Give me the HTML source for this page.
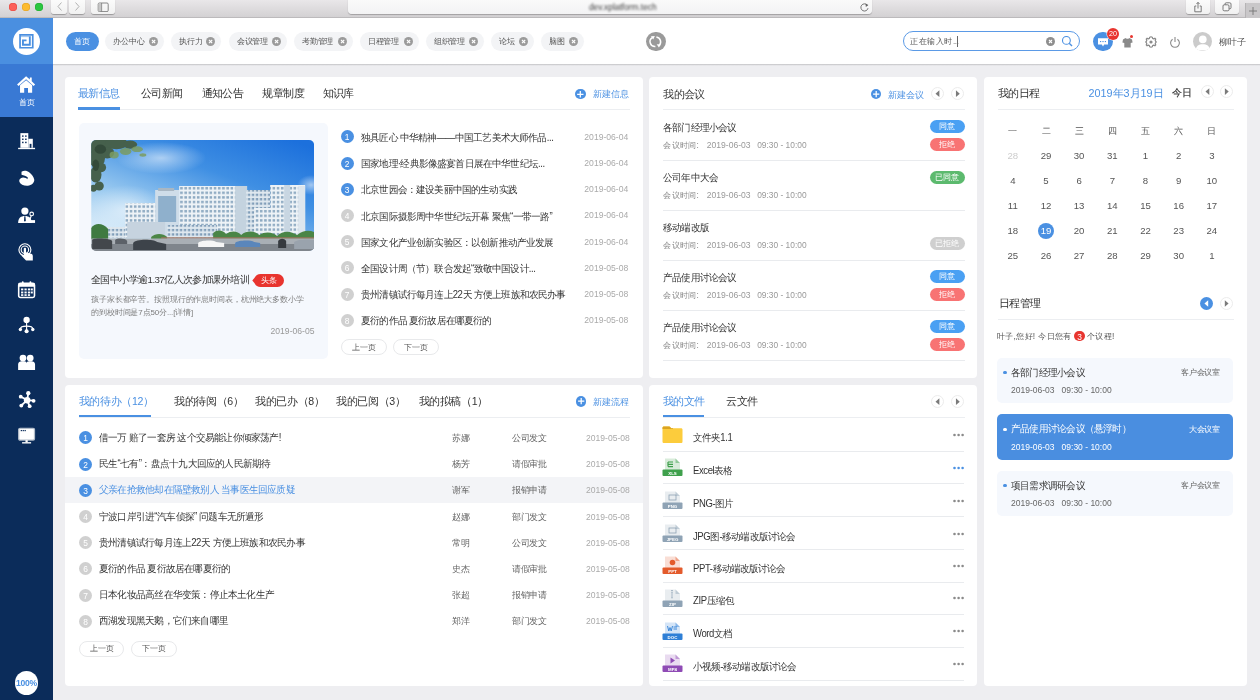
<!DOCTYPE html><html><head><meta charset="utf-8"><title>dashboard</title><style>
*{margin:0;padding:0;box-sizing:border-box}
html,body{width:1260px;height:700px;overflow:hidden;background:#eeeef1;font-family:"Liberation Sans",sans-serif}
#root{position:absolute;left:0;top:0;width:1260px;height:700px;overflow:hidden;background:#eeeef1;will-change:transform}
.a{position:absolute}
.t{position:absolute;white-space:nowrap;line-height:0;height:0}
.r{text-align:right}
.c{text-align:center}
</style></head><body><div id="root">
<div class="a " style="left:0.0px;top:0.0px;width:1260.0px;height:18.0px;background:linear-gradient(#e9e7e9,#d3d1d3);border-bottom:1px solid #bcbabc"></div>
<div class="a" style="left:8.5px;top:2.5px;width:8.4px;height:8.4px;border-radius:50%;background:#fc5f58;box-shadow:inset 0 0 0 0.5px #e3463f"></div>
<div class="a" style="left:21.5px;top:2.5px;width:8.4px;height:8.4px;border-radius:50%;background:#fdbb2f;box-shadow:inset 0 0 0 0.5px #dfa023"></div>
<div class="a" style="left:34.7px;top:2.5px;width:8.4px;height:8.4px;border-radius:50%;background:#2bc640;box-shadow:inset 0 0 0 0.5px #1fa82f"></div>
<div class="a " style="left:51.4px;top:-3.0px;width:15.7px;height:16.8px;background:linear-gradient(#fdfdfd,#f1f1f1);border-radius:3px;box-shadow:0 0.6px 0.8px rgba(0,0,0,.28)"></div>
<div class="a " style="left:68.8px;top:-3.0px;width:16.0px;height:16.8px;background:linear-gradient(#fdfdfd,#f1f1f1);border-radius:3px;box-shadow:0 0.6px 0.8px rgba(0,0,0,.28)"></div>
<div class="a " style="left:91.2px;top:-3.0px;width:24.0px;height:16.8px;background:linear-gradient(#fdfdfd,#f1f1f1);border-radius:3px;box-shadow:0 0.6px 0.8px rgba(0,0,0,.28)"></div>
<svg class="a" style="left:55.0px;top:1.0px;" width="10" height="11" viewBox="0 0 10 11"><path d="M6.5 1.5 L3 5.5 L6.5 9.5" fill="none" stroke="#a9a9a9" stroke-width="0.9"/></svg>
<svg class="a" style="left:72.0px;top:1.0px;" width="10" height="11" viewBox="0 0 10 11"><path d="M3.5 1.5 L7 5.5 L3.5 9.5" fill="none" stroke="#a9a9a9" stroke-width="0.9"/></svg>
<svg class="a" style="left:97.0px;top:1.5px;" width="12" height="10" viewBox="0 0 12 10"><rect x="1.2" y="1" width="10" height="8.6" rx="1.2" fill="none" stroke="#7a7a7a" stroke-width="0.9"/><line x1="4.6" y1="1" x2="4.6" y2="9.6" stroke="#7a7a7a" stroke-width="0.9"/><rect x="1.6" y="1.5" width="2.6" height="7.6" fill="#c6c6c6"/></svg>
<div class="a " style="left:348.0px;top:-3.0px;width:524.0px;height:17.3px;background:linear-gradient(#fbfbfb,#f3f3f4);border-radius:4px;box-shadow:0 0.7px 1px rgba(0,0,0,.25)"></div>
<div class="a" style="left:562.8px;top:0px;width:120px;height:15px;line-height:15px;text-align:center;font-size:8.4px;color:#404040;filter:blur(0.9px);white-space:nowrap">dev.xplatform.tech</div>
<svg class="a" style="left:859.0px;top:1.5px;" width="11" height="11" viewBox="0 0 11 11"><path d="M8.3 3.2 A3.6 3.6 0 1 0 9 6.2" fill="none" stroke="#666" stroke-width="0.9"/><path d="M6.6 1.4 L9.4 3.1 L6.8 4.9 Z" fill="#666"/></svg>
<div class="a " style="left:1186.0px;top:-3.0px;width:23.6px;height:16.9px;background:linear-gradient(#fdfdfd,#f1f1f1);border-radius:3px;box-shadow:0 0.6px 0.8px rgba(0,0,0,.28)"></div>
<div class="a " style="left:1215.0px;top:-3.0px;width:23.9px;height:16.9px;background:linear-gradient(#fdfdfd,#f1f1f1);border-radius:3px;box-shadow:0 0.6px 0.8px rgba(0,0,0,.28)"></div>
<svg class="a" style="left:1192.0px;top:0.5px;" width="12" height="12" viewBox="0 0 12 12"><path d="M4.3 5 H2.8 V10.8 H9.2 V5 H7.7" fill="none" stroke="#6d6d6d" stroke-width="0.9"/><line x1="6" y1="1.5" x2="6" y2="7.5" stroke="#6d6d6d" stroke-width="0.9"/><path d="M4.5 3 L6 1.3 L7.5 3" fill="none" stroke="#6d6d6d" stroke-width="0.9"/></svg>
<svg class="a" style="left:1221.0px;top:1.0px;" width="12" height="12" viewBox="0 0 12 12"><rect x="4" y="1.8" width="6" height="6" rx="1.2" fill="none" stroke="#6d6d6d" stroke-width="0.9"/><rect x="2" y="3.8" width="6" height="6" rx="1.2" fill="#f6f6f6" stroke="#6d6d6d" stroke-width="0.9"/></svg>
<div class="a " style="left:1245.0px;top:3.0px;width:15.0px;height:14.5px;background:#c9c7c9;border-left:0.5px solid #b5b3b5"></div>
<svg class="a" style="left:1247.0px;top:5.0px;" width="12" height="12" viewBox="0 0 12 12"><line x1="6" y1="2" x2="6" y2="10" stroke="#777" stroke-width="0.9"/><line x1="2" y1="6" x2="10" y2="6" stroke="#777" stroke-width="0.9"/></svg>
<div class="a " style="left:0.0px;top:18.0px;width:52.7px;height:682.0px;background:#0b2c5a"></div>
<div class="a " style="left:0.0px;top:18.0px;width:52.7px;height:46.0px;background:#4a8fe0"></div>
<div class="a " style="left:0.0px;top:64.0px;width:52.7px;height:53.0px;background:#3979d4"></div>
<div class="a" style="left:13.1px;top:27.5px;width:27.0px;height:27.0px;border-radius:50%;background:#fff"></div>
<svg class="a" style="left:17.0px;top:32.0px;" width="19" height="19" viewBox="0 0 19 19"><path d="M2.2 2 H16.6 V16.6 H2.2 Z M3.9 3.7 H14.9 V14.9 H3.9 Z" fill="#4a8fe0" fill-rule="evenodd"/><rect x="3.9" y="4.2" width="10" height="0.9" fill="#4a8fe0" opacity="0.6"/><path d="M11.9 4.6 H13.75 V13.7 H5 V7.6 H9.5 V9.3 H6.9 V11.7 H11.9 Z" fill="#4a8fe0"/></svg>
<svg class="a" style="left:16.4px;top:74.8px;" width="20.2" height="18.6" viewBox="0 0 19 17"><path d="M9.5 1 L1 8.6 L2.4 10 L9.5 3.7 L16.6 10 L18 8.6 L14.8 5.7 V2 H13 V4.1 Z" fill="#fff"/><path d="M3.8 9.4 L9.5 4.6 L15.2 9.4 V16.5 H11.3 V12 H7.7 V16.5 H3.8 Z" fill="#fff"/></svg>
<div class="t c" style="left:1.5px;width:50px;top:103.3px;font-size:8.20px;color:#fff;">首页</div>
<svg class="a" style="left:17.3px;top:131.6px;" width="19.2" height="19.2" viewBox="0 0 17 17"><path d="M3 1 H10 V14 H3 Z" fill="#fff"/><path d="M10 6 H14 V14 H10 Z" fill="#fff"/><rect x="1" y="14" width="15" height="1.2" fill="#fff"/><g fill="#0b2c5a"><rect x="4.5" y="3" width="1.3" height="1.3"/><rect x="7.2" y="3" width="1.3" height="1.3"/><rect x="4.5" y="5.8" width="1.3" height="1.3"/><rect x="7.2" y="5.8" width="1.3" height="1.3"/><rect x="4.5" y="8.6" width="1.3" height="1.3"/><rect x="7.2" y="8.6" width="1.3" height="1.3"/><rect x="11.2" y="10.5" width="1.6" height="3.5"/></g></svg>
<svg class="a" style="left:17.3px;top:168.6px;" width="19.2" height="19.2" viewBox="0 0 17 17"><path d="M4 2.5 C6 1 9 1.5 11 3 C13 4.5 15 7 15.3 9.5 C15.5 12 13 14.5 9.5 14.8 C6 15 3 13.5 2.2 11.5 C1.6 9.5 3 7.8 5.3 7.6 C7 7.5 8.5 8.3 9.2 9 L9.6 7.5 C8.2 6.2 6 5.3 4 5 Z" fill="#fff"/></svg>
<svg class="a" style="left:17.3px;top:205.6px;" width="19.2" height="19.2" viewBox="0 0 17 17"><circle cx="7" cy="4.5" r="3.2" fill="#fff"/><path d="M1 15 C1 10.5 3.5 8.8 7 8.8 C10.5 8.8 13 10.5 13 15 Z" fill="#fff"/><path d="M6.5 9 L7.5 9 L7.8 13 L7 14 L6.2 13 Z" fill="#0b2c5a"/><circle cx="13" cy="7" r="1.6" fill="none" stroke="#fff" stroke-width="1"/><line x1="12.6" y1="8.5" x2="11.5" y2="12" stroke="#fff" stroke-width="1"/><rect x="9" y="12.5" width="7" height="2.5" fill="#fff"/></svg>
<svg class="a" style="left:17.3px;top:242.6px;" width="19.2" height="19.2" viewBox="0 0 17 17"><circle cx="7" cy="6" r="5.3" fill="none" stroke="#fff" stroke-width="1"/><circle cx="7" cy="6" r="3.3" fill="none" stroke="#fff" stroke-width="1"/><path d="M6 5 C6 4 8 4 8 5 V8.5 L12.5 9.5 C13.5 9.8 14 10.5 14 11.5 V15.5 H8 L4.2 11.5 C3.8 11 4.5 10.2 5.2 10.5 L6 11 Z" fill="#fff"/></svg>
<svg class="a" style="left:17.3px;top:279.6px;" width="19.2" height="19.2" viewBox="0 0 17 17"><rect x="1.5" y="3" width="14" height="12.5" rx="1.5" fill="none" stroke="#fff" stroke-width="1.4"/><rect x="1.5" y="3" width="14" height="3" fill="#fff"/><rect x="4.3" y="1" width="1.6" height="3.5" rx="0.8" fill="#fff"/><rect x="11.1" y="1" width="1.6" height="3.5" rx="0.8" fill="#fff"/><g fill="#fff"><rect x="3.6" y="7.5" width="2" height="1.7"/><rect x="6.6" y="7.5" width="2" height="1.7"/><rect x="9.6" y="7.5" width="2" height="1.7"/><rect x="12.2" y="7.5" width="1.8" height="1.7"/><rect x="3.6" y="10.2" width="2" height="1.7"/><rect x="6.6" y="10.2" width="2" height="1.7"/><rect x="9.6" y="10.2" width="2" height="1.7"/><rect x="12.2" y="10.2" width="1.8" height="1.7"/><rect x="3.6" y="12.6" width="2" height="1.5"/><rect x="6.6" y="12.6" width="2" height="1.5"/><rect x="9.6" y="12.6" width="2" height="1.5"/></g></svg>
<svg class="a" style="left:17.3px;top:315.6px;" width="19.2" height="19.2" viewBox="0 0 17 17"><circle cx="8.5" cy="3.5" r="2.8" fill="#fff"/><line x1="8.5" y1="6" x2="8.5" y2="13" stroke="#fff" stroke-width="1"/><path d="M3 11.5 Q3 9 8.5 9 Q14 9 14 11.5" fill="none" stroke="#fff" stroke-width="1"/><circle cx="3" cy="12" r="1.5" fill="#fff"/><circle cx="14" cy="12" r="1.5" fill="#fff"/><circle cx="8.5" cy="13.5" r="1.8" fill="#fff"/></svg>
<svg class="a" style="left:17.3px;top:352.6px;" width="19.2" height="19.2" viewBox="0 0 17 17"><circle cx="5.3" cy="4.5" r="3" fill="#fff"/><circle cx="11.7" cy="4.5" r="3" fill="#fff"/><path d="M1 15 V10 C1 8.2 2.5 7.3 4.3 7.3 H6.3 C8 7.3 8.5 8 8.5 9 C8.5 8 9.2 7.3 10.8 7.3 H12.7 C14.5 7.3 16 8.2 16 10 V15 Z" fill="#fff"/></svg>
<svg class="a" style="left:17.3px;top:389.6px;" width="19.2" height="19.2" viewBox="0 0 17 17"><g stroke="#fff" stroke-width="1.6"><line x1="9" y1="9" x2="10" y2="3"/><line x1="9" y1="9" x2="3.5" y2="6"/><line x1="9" y1="9" x2="14.5" y2="9.5"/><line x1="9" y1="9" x2="4" y2="13.5"/><line x1="9" y1="9" x2="11" y2="14"/></g><circle cx="9" cy="9" r="2.9" fill="#fff"/><g fill="#fff"><circle cx="10" cy="2.8" r="1.9"/><circle cx="3.3" cy="5.9" r="1.7"/><circle cx="14.7" cy="9.6" r="1.7"/><circle cx="3.8" cy="13.8" r="1.7"/><circle cx="11.2" cy="14.3" r="1.7"/></g></svg>
<svg class="a" style="left:17.3px;top:425.6px;" width="19.2" height="19.2" viewBox="0 0 17 17"><rect x="1.5" y="2" width="14" height="10.5" rx="1.2" fill="#fff" stroke="#b3bdca" stroke-width="1.1"/><rect x="7.5" y="12.5" width="2" height="2" fill="#fff"/><rect x="4.5" y="14.3" width="8" height="1.2" fill="#fff"/><g fill="#0b2c5a"><rect x="3.3" y="3.5" width="1.1" height="1.1"/><rect x="5" y="3.5" width="1.1" height="1.1"/><rect x="6.7" y="3.5" width="1.1" height="1.1"/></g></svg>
<div class="a" style="left:14.7px;top:671.2px;width:23.6px;height:23.6px;border-radius:50%;background:#fff"></div>
<div class="t c" style="left:11.5px;width:30px;top:682.7px;font-size:8.60px;color:#4a90e2;font-weight:bold;letter-spacing:-0.3px">100%</div>
<div class="a " style="left:52.7px;top:18.0px;width:1207.3px;height:46.0px;background:#fff"></div>
<div class="a " style="left:52.7px;top:63.6px;width:1207.3px;height:2.8px;background:linear-gradient(rgba(0,0,0,.2),rgba(0,0,0,.05) 60%,rgba(0,0,0,0))"></div>
<div class="a " style="left:66.0px;top:32.2px;width:32.6px;height:18.4px;background:#4a90e2;border-radius:10px"></div>
<div class="t c" style="left:62.3px;width:40px;top:42.0px;font-size:8.20px;color:#fff;">首页</div>
<div class="a " style="left:105.4px;top:32.2px;width:58.4px;height:18.4px;background:#f3f4f6;border-radius:10px"></div>
<div class="t" style="left:113.4px;top:42.0px;font-size:8.00px;color:#555;;letter-spacing:-0.20px">办公中心</div>
<div class="a" style="left:148.7px;top:36.8px;width:9.2px;height:9.2px;border-radius:50%;background:#9b9b9b"></div>
<svg class="a" style="left:148.7px;top:36.8px;" width="9.2" height="9.2" viewBox="0 0 9.2 9.2"><path d="M3 3 L6.2 6.2 M6.2 3 L3 6.2" stroke="#fff" stroke-width="1.1"/></svg>
<div class="a " style="left:171.0px;top:32.2px;width:50.4px;height:18.4px;background:#f3f4f6;border-radius:10px"></div>
<div class="t" style="left:179.0px;top:42.0px;font-size:8.00px;color:#555;;letter-spacing:-0.20px">执行力</div>
<div class="a" style="left:206.3px;top:36.8px;width:9.2px;height:9.2px;border-radius:50%;background:#9b9b9b"></div>
<svg class="a" style="left:206.3px;top:36.8px;" width="9.2" height="9.2" viewBox="0 0 9.2 9.2"><path d="M3 3 L6.2 6.2 M6.2 3 L3 6.2" stroke="#fff" stroke-width="1.1"/></svg>
<div class="a " style="left:228.8px;top:32.2px;width:58.2px;height:18.4px;background:#f3f4f6;border-radius:10px"></div>
<div class="t" style="left:236.8px;top:42.0px;font-size:8.00px;color:#555;;letter-spacing:-0.20px">会议管理</div>
<div class="a" style="left:271.9px;top:36.8px;width:9.2px;height:9.2px;border-radius:50%;background:#9b9b9b"></div>
<svg class="a" style="left:271.9px;top:36.8px;" width="9.2" height="9.2" viewBox="0 0 9.2 9.2"><path d="M3 3 L6.2 6.2 M6.2 3 L3 6.2" stroke="#fff" stroke-width="1.1"/></svg>
<div class="a " style="left:294.0px;top:32.2px;width:58.9px;height:18.4px;background:#f3f4f6;border-radius:10px"></div>
<div class="t" style="left:302.0px;top:42.0px;font-size:8.00px;color:#555;;letter-spacing:-0.20px">考勤管理</div>
<div class="a" style="left:337.8px;top:36.8px;width:9.2px;height:9.2px;border-radius:50%;background:#9b9b9b"></div>
<svg class="a" style="left:337.8px;top:36.8px;" width="9.2" height="9.2" viewBox="0 0 9.2 9.2"><path d="M3 3 L6.2 6.2 M6.2 3 L3 6.2" stroke="#fff" stroke-width="1.1"/></svg>
<div class="a " style="left:359.8px;top:32.2px;width:58.8px;height:18.4px;background:#f3f4f6;border-radius:10px"></div>
<div class="t" style="left:367.8px;top:42.0px;font-size:8.00px;color:#555;;letter-spacing:-0.20px">日程管理</div>
<div class="a" style="left:403.5px;top:36.8px;width:9.2px;height:9.2px;border-radius:50%;background:#9b9b9b"></div>
<svg class="a" style="left:403.5px;top:36.8px;" width="9.2" height="9.2" viewBox="0 0 9.2 9.2"><path d="M3 3 L6.2 6.2 M6.2 3 L3 6.2" stroke="#fff" stroke-width="1.1"/></svg>
<div class="a " style="left:425.9px;top:32.2px;width:57.8px;height:18.4px;background:#f3f4f6;border-radius:10px"></div>
<div class="t" style="left:433.9px;top:42.0px;font-size:8.00px;color:#555;;letter-spacing:-0.20px">组织管理</div>
<div class="a" style="left:468.6px;top:36.8px;width:9.2px;height:9.2px;border-radius:50%;background:#9b9b9b"></div>
<svg class="a" style="left:468.6px;top:36.8px;" width="9.2" height="9.2" viewBox="0 0 9.2 9.2"><path d="M3 3 L6.2 6.2 M6.2 3 L3 6.2" stroke="#fff" stroke-width="1.1"/></svg>
<div class="a " style="left:491.0px;top:32.2px;width:42.8px;height:18.4px;background:#f3f4f6;border-radius:10px"></div>
<div class="t" style="left:499.0px;top:42.0px;font-size:8.00px;color:#555;;letter-spacing:-0.20px">论坛</div>
<div class="a" style="left:518.7px;top:36.8px;width:9.2px;height:9.2px;border-radius:50%;background:#9b9b9b"></div>
<svg class="a" style="left:518.7px;top:36.8px;" width="9.2" height="9.2" viewBox="0 0 9.2 9.2"><path d="M3 3 L6.2 6.2 M6.2 3 L3 6.2" stroke="#fff" stroke-width="1.1"/></svg>
<div class="a " style="left:540.8px;top:32.2px;width:42.9px;height:18.4px;background:#f3f4f6;border-radius:10px"></div>
<div class="t" style="left:548.8px;top:42.0px;font-size:8.00px;color:#555;;letter-spacing:-0.20px">脑图</div>
<div class="a" style="left:568.6px;top:36.8px;width:9.2px;height:9.2px;border-radius:50%;background:#9b9b9b"></div>
<svg class="a" style="left:568.6px;top:36.8px;" width="9.2" height="9.2" viewBox="0 0 9.2 9.2"><path d="M3 3 L6.2 6.2 M6.2 3 L3 6.2" stroke="#fff" stroke-width="1.1"/></svg>
<div class="a" style="left:646.3px;top:31.6px;width:19.4px;height:19.4px;border-radius:50%;background:#9a9a9a"></div>
<svg class="a" style="left:646.1px;top:31.6px;" width="19.7" height="19.7" viewBox="0 0 19.7 19.7"><path d="M6.3 5.6 A4.9 4.9 0 0 0 9.4 14.6" fill="none" stroke="#fff" stroke-width="1.5"/><path d="M8.9 4.0 L4.9 4.3 L7.2 7.6 Z" fill="#fff"/><path d="M10.4 5.0 A4.9 4.9 0 0 1 12.9 13.6" fill="none" stroke="#fff" stroke-width="1.5"/><path d="M12.9 15.6 L10.7 12.2 L14.9 12.6 Z" fill="#fff"/></svg>
<div class="a " style="left:903.0px;top:31.0px;width:177.2px;height:20.4px;border:1px solid #5b9ae6;border-radius:10.2px;background:#fff"></div>
<div class="t" style="left:910.0px;top:41.7px;font-size:8.00px;color:#555;letter-spacing:0.6px">正在输入时<span style="letter-spacing:-0.4px">...</span></div>
<div class="a " style="left:956.5px;top:35.5px;width:0.8px;height:11.5px;background:#666"></div>
<div class="a" style="left:1045.8px;top:36.8px;width:9.0px;height:9.0px;border-radius:50%;background:#8e8e8e"></div>
<svg class="a" style="left:1045.8px;top:36.8px;" width="9" height="9" viewBox="0 0 9 9"><path d="M3 3 L6 6 M6 3 L3 6" stroke="#fff" stroke-width="1.1"/></svg>
<svg class="a" style="left:1061.0px;top:35.0px;" width="13" height="13" viewBox="0 0 13 13"><circle cx="5.4" cy="5.4" r="3.9" fill="none" stroke="#4a90e2" stroke-width="1.1"/><line x1="8.2" y1="8.2" x2="11" y2="11" stroke="#4a90e2" stroke-width="1.4"/></svg>
<div class="a" style="left:1093.2px;top:31.5px;width:19.6px;height:19.6px;border-radius:50%;background:#4a90e2"></div>
<svg class="a" style="left:1097.0px;top:36.5px;" width="12" height="11" viewBox="0 0 12 11"><path d="M1 1.2 H11 V7.6 H7.2 L6 9.4 L4.8 7.6 H1 Z" fill="#fff"/><g fill="#4a90e2"><rect x="3" y="4" width="1.2" height="1.1"/><rect x="5.4" y="4" width="1.2" height="1.1"/><rect x="7.8" y="4" width="1.2" height="1.1"/></g></svg>
<div class="a" style="left:1106.9px;top:28.4px;width:12.0px;height:12.0px;border-radius:50%;background:#e8352f;box-shadow:0 0 0 0.5px #fff"></div>
<div class="t c" style="left:1102.9px;width:20px;top:34.1px;font-size:7.20px;color:#fff;">20</div>
<svg class="a" style="left:1121.5px;top:37.0px;" width="11" height="11" viewBox="0 0 11 11"><path d="M3.5 1 L1 2.5 L0.4 5.5 L2.3 6 V10.5 H8.7 V6 L10.6 5.5 L10 2.5 L7.5 1 C7 2 4 2 3.5 1 Z" fill="#8a8a8a"/></svg>
<div class="a" style="left:1130.1px;top:34.6px;width:3.4px;height:3.4px;border-radius:50%;background:#e8352f"></div>
<svg class="a" style="left:1144.7px;top:36.0px;" width="12" height="12" viewBox="0 0 12 12"><path d="M6 0.8 L7.3 1.2 L7.6 2.4 L8.8 2.9 L9.9 2.2 L10.8 3.1 L10.2 4.3 L10.7 5.4 L11.2 6 L10.7 6.6 L10.2 7.7 L10.8 8.9 L9.9 9.8 L8.8 9.1 L7.6 9.6 L7.3 10.8 L6 11.2 L4.7 10.8 L4.4 9.6 L3.2 9.1 L2.1 9.8 L1.2 8.9 L1.8 7.7 L1.3 6.6 L0.8 6 L1.3 5.4 L1.8 4.3 L1.2 3.1 L2.1 2.2 L3.2 2.9 L4.4 2.4 L4.7 1.2 Z" fill="none" stroke="#8a8a8a" stroke-width="1.2" stroke-linejoin="round"/><circle cx="6" cy="6" r="1.6" fill="#8a8a8a"/></svg>
<svg class="a" style="left:1168.7px;top:36.0px;" width="12" height="12" viewBox="0 0 12 12"><path d="M3.6 3.2 A4.4 4.4 0 1 0 8.4 3.2" fill="none" stroke="#8a8a8a" stroke-width="1.1"/><line x1="6" y1="1" x2="6" y2="6" stroke="#8a8a8a" stroke-width="1.1"/></svg>
<div class="a" style="left:1192.6px;top:31.5px;width:19.6px;height:19.6px;border-radius:50%;background:#cbcbcb;overflow:hidden"><svg width="19.6" height="19.6" viewBox="0 0 20 20"><circle cx="10" cy="7.6" r="3.9" fill="#fff"/><path d="M2.6 19 C3 14 6 12.6 10 12.6 C14 12.6 17 14 17.4 19 Z" fill="#fff"/></svg></div>
<div class="t" style="left:1219.0px;top:41.5px;font-size:9.20px;color:#555;;letter-spacing:0.20px">柳叶子</div>
<div class="a " style="left:65.0px;top:77.0px;width:577.5px;height:301.0px;background:#fff;border-radius:4px"></div>
<div class="a " style="left:649.0px;top:77.0px;width:328.0px;height:301.0px;background:#fff;border-radius:4px"></div>
<div class="a " style="left:984.0px;top:77.0px;width:263.0px;height:609.0px;background:#fff;border-radius:4px"></div>
<div class="a " style="left:65.0px;top:385.0px;width:577.5px;height:301.0px;background:#fff;border-radius:4px"></div>
<div class="a " style="left:649.0px;top:385.0px;width:328.0px;height:301.0px;background:#fff;border-radius:4px"></div>
<div class="t" style="left:77.8px;top:92.8px;font-size:10.60px;color:#4a90e2;;letter-spacing:-0.60px">最新信息</div>
<div class="t" style="left:140.8px;top:92.8px;font-size:10.60px;color:#333;;letter-spacing:-0.60px">公司新闻</div>
<div class="t" style="left:201.7px;top:92.8px;font-size:10.60px;color:#333;;letter-spacing:-0.60px">通知公告</div>
<div class="t" style="left:262.4px;top:92.8px;font-size:10.60px;color:#333;;letter-spacing:-0.60px">规章制度</div>
<div class="t" style="left:322.7px;top:92.8px;font-size:10.60px;color:#333;;letter-spacing:-0.60px">知识库</div>
<div class="a " style="left:78.0px;top:109.0px;width:552.0px;height:1.0px;background:#eceef1"></div>
<div class="a " style="left:78.0px;top:107.2px;width:42.0px;height:2.4px;background:#4a90e2"></div>
<div class="a" style="left:575.3px;top:88.5px;width:10.6px;height:10.6px;border-radius:50%;background:#4a90e2"></div>
<svg class="a" style="left:575.3px;top:88.5px;" width="10.6" height="10.6" viewBox="0 0 10.6 10.6"><path d="M2.12 5.3 H8.48 M5.3 2.12 V8.48" stroke="#fff" stroke-width="1.25"/></svg>
<div class="t" style="left:592.7px;top:94.1px;font-size:9.30px;color:#4a90e2;">新建信息</div>
<div class="a " style="left:79.0px;top:123.0px;width:248.5px;height:236.0px;background:#f5f8fd;border-radius:5px"></div>
<svg class="a" style="left:91.2px;top:139.5px;" width="223.3" height="111" viewBox="0 0 223 111">
<defs>
<linearGradient id="sky" x1="0.9" y1="0" x2="0.15" y2="1">
<stop offset="0" stop-color="#1c70dc"/><stop offset="0.35" stop-color="#3f8fe3"/><stop offset="0.7" stop-color="#9ccbf0"/><stop offset="1" stop-color="#e8f4fb"/>
</linearGradient>
<radialGradient id="cl" cx="0.5" cy="0.5" r="0.5"><stop offset="0" stop-color="#fff" stop-opacity="0.55"/><stop offset="1" stop-color="#fff" stop-opacity="0"/></radialGradient>
<pattern id="win" width="4.2" height="4.6" patternUnits="userSpaceOnUse"><rect width="4.2" height="4.6" fill="#eef3f7"/><rect x="0.8" y="1" width="2.6" height="2.4" fill="#8eaac2"/></pattern>
<pattern id="win2" width="4" height="4.4" patternUnits="userSpaceOnUse"><rect width="4" height="4.4" fill="#dfe8ef"/><rect x="0.7" y="0.9" width="2.4" height="2.3" fill="#7f9db8"/></pattern>
<clipPath id="pc"><rect x="0" y="0" width="223" height="111" rx="5"/></clipPath>
</defs>
<g clip-path="url(#pc)">
<rect width="223" height="111" fill="url(#sky)"/>
<ellipse cx="70" cy="18" rx="45" ry="16" fill="url(#cl)"/>
<ellipse cx="35" cy="70" rx="40" ry="25" fill="url(#cl)"/>
<ellipse cx="220" cy="45" rx="14" ry="10" fill="url(#cl)"/>
<!-- buildings -->
<rect x="14" y="87" width="22" height="11" fill="url(#win2)"/>
<rect x="34" y="63" width="33" height="35" fill="url(#win)"/>
<rect x="64" y="50" width="24" height="48" fill="#cfdde9"/>
<rect x="67" y="56" width="18" height="26" fill="#8fb0cc"/>
<rect x="88" y="46" width="67" height="52" fill="url(#win)"/>
<rect x="144" y="46" width="12" height="52" fill="#c4d3df"/>
<rect x="155" y="50" width="24" height="48" fill="url(#win2)"/>
<rect x="163" y="68" width="20" height="30" fill="url(#win)"/>
<rect x="179" y="45" width="35" height="52" fill="url(#win)"/>
<rect x="193" y="45" width="6" height="52" fill="#c8d6e2"/>
<rect x="207" y="46" width="7" height="51" fill="#dde6ee"/>
<rect x="36" y="82" width="38" height="16" fill="#c6d3df"/>
<rect x="76" y="85" width="50" height="13" fill="url(#win2)"/>
<rect x="67" y="48" width="16" height="3" fill="#a9b7c3"/>
<!-- trees -->
<g transform="scale(1.15)"><g fill="#46604c">
<ellipse cx="6" cy="4" rx="12" ry="8"/><ellipse cx="22" cy="3" rx="10" ry="5"/><ellipse cx="34" cy="4" rx="6" ry="3.5"/>
<ellipse cx="5" cy="16" rx="7" ry="8"/><ellipse cx="14" cy="11" rx="6" ry="5"/><ellipse cx="4" cy="30" rx="5" ry="7"/><ellipse cx="9" cy="24" rx="4" ry="4"/>
<ellipse cx="7" cy="40" rx="4" ry="4"/><ellipse cx="2" cy="42" rx="3" ry="3"/>
</g>
<g fill="#7b9c62" opacity="0.85"><ellipse cx="30" cy="10" rx="5" ry="3"/><ellipse cx="40" cy="8" rx="5" ry="2.5"/><ellipse cx="20" cy="13" rx="4" ry="3"/><ellipse cx="45" cy="13" rx="3" ry="1.5"/></g>
<g fill="#2f4536" opacity="0.8"><ellipse cx="8" cy="8" rx="5" ry="4"/><ellipse cx="4" cy="22" rx="3" ry="5"/></g></g>
<path d="M0 88 C4 82 12 83 17 89 V99 H0 Z" fill="#3f7a40"/>
<path d="M60 97 C64 93 72 93 76 97 V100 H60 Z" fill="#4b8646"/>
<path d="M122 93 C126 89 132 90 135 94 C140 90 147 91 150 95 C156 90 164 91 168 95 C174 91 182 92 186 96 C192 90 200 91 206 95 C212 90 218 90 223 92 V100 H122 Z" fill="#4a8546"/>
<rect x="70" y="97" width="153" height="2" fill="#a0705c" opacity="0.7"/>
<!-- road -->
<rect x="0" y="98.5" width="223" height="13" fill="#a9afb5"/>
<rect x="0" y="104" width="223" height="7" fill="#7f858c"/>
<path d="M1 100 C2 98 18 98 21 101 V109 H1 Z" fill="#43474c"/>
<path d="M24 100 C26 98 34 98 36 101 V104 H24 Z" fill="#5c6168"/>
<path d="M42 103 C44 99 62 99 66 102 L75 104 V110 H42 Z" fill="#3d434a"/>
<path d="M107 103 C110 100 122 100 125 102 L133 103 V107 H107 Z" fill="#f6f6f6"/>
<path d="M144 103 C147 100 160 100 163 102 L169 103 V107 H144 Z" fill="#5a86bb"/>
<path d="M187 101 C189 98 193 98 195 101 V108 H187 Z" fill="#363a3f"/>
<path d="M203 102 C206 99 218 99 223 100 V109 H203 Z" fill="#9aa3ad"/>
</g>
</svg>
<div class="t" style="left:91.0px;top:280.1px;font-size:9.70px;color:#333;;letter-spacing:-0.57px">全国中小学逾1.37亿人次参加课外培训</div>
<svg class="a" style="left:251.5px;top:274.0px;" width="32" height="13" viewBox="0 0 32 13"><path d="M8.5 0 H25.5 A6.5 6.5 0 0 1 25.5 13 H8.5 A6.5 6.5 0 0 1 2.6 9.2 L0.3 6.5 L2.6 3.8 A6.5 6.5 0 0 1 8.5 0 Z" fill="#e8342e"/></svg>
<div class="t c" style="left:254.2px;width:30px;top:280.5px;font-size:8.20px;color:#fff;;letter-spacing:-0.20px">头条</div>
<div class="t" style="left:91.0px;top:299.5px;font-size:7.95px;color:#7d7d7d;;letter-spacing:-0.12px">孩子家长都辛苦。按照现行的作息时间表，杭州绝大多数小学</div>
<div class="t" style="left:91.0px;top:313.1px;font-size:7.95px;color:#7d7d7d;;letter-spacing:-0.12px">的到校时间是7点50分...[详情]</div>
<div class="t r" style="left:214.5px;width:100px;top:331.0px;font-size:8.60px;color:#999;">2019-06-05</div>
<div class="a" style="left:340.5px;top:130.3px;width:13.0px;height:13.0px;border-radius:50%;background:#4a90e2"></div>
<div class="t c" style="left:340.0px;width:14px;top:137.3px;font-size:8.40px;color:#fff;">1</div>
<div class="t" style="left:360.5px;top:138.0px;font-size:10.00px;color:#333;;letter-spacing:-0.40px;transform:scaleX(0.9550);transform-origin:left 0">独具匠心 中华精神——中国工艺美术大师作品...</div>
<div class="t r" style="left:528.3px;width:100px;top:136.8px;font-size:8.60px;color:#aaa;">2019-06-04</div>
<div class="a" style="left:340.5px;top:156.5px;width:13.0px;height:13.0px;border-radius:50%;background:#4a90e2"></div>
<div class="t c" style="left:340.0px;width:14px;top:163.5px;font-size:8.40px;color:#fff;">2</div>
<div class="t" style="left:360.5px;top:164.2px;font-size:10.00px;color:#333;;letter-spacing:-0.40px;transform:scaleX(0.9550);transform-origin:left 0">国家地理·经典影像盛宴首日展在中华世纪坛...</div>
<div class="t r" style="left:528.3px;width:100px;top:163.0px;font-size:8.60px;color:#aaa;">2019-06-04</div>
<div class="a" style="left:340.5px;top:182.7px;width:13.0px;height:13.0px;border-radius:50%;background:#4a90e2"></div>
<div class="t c" style="left:340.0px;width:14px;top:189.7px;font-size:8.40px;color:#fff;">3</div>
<div class="t" style="left:360.5px;top:190.4px;font-size:10.00px;color:#333;;letter-spacing:-0.40px;transform:scaleX(0.9550);transform-origin:left 0">北京世园会：建设美丽中国的生动实践</div>
<div class="t r" style="left:528.3px;width:100px;top:189.2px;font-size:8.60px;color:#aaa;">2019-06-04</div>
<div class="a" style="left:340.5px;top:208.9px;width:13.0px;height:13.0px;border-radius:50%;background:#d0d0d0"></div>
<div class="t c" style="left:340.0px;width:14px;top:215.9px;font-size:8.40px;color:#fff;">4</div>
<div class="t" style="left:360.5px;top:216.6px;font-size:10.00px;color:#333;;letter-spacing:-0.40px;transform:scaleX(0.9550);transform-origin:left 0">北京国际摄影周中华世纪坛开幕 聚焦“一带一路”</div>
<div class="t r" style="left:528.3px;width:100px;top:215.4px;font-size:8.60px;color:#aaa;">2019-06-04</div>
<div class="a" style="left:340.5px;top:235.1px;width:13.0px;height:13.0px;border-radius:50%;background:#d0d0d0"></div>
<div class="t c" style="left:340.0px;width:14px;top:242.1px;font-size:8.40px;color:#fff;">5</div>
<div class="t" style="left:360.5px;top:242.8px;font-size:10.00px;color:#333;;letter-spacing:-0.40px;transform:scaleX(0.9550);transform-origin:left 0">国家文化产业创新实验区：以创新推动产业发展</div>
<div class="t r" style="left:528.3px;width:100px;top:241.6px;font-size:8.60px;color:#aaa;">2019-06-04</div>
<div class="a" style="left:340.5px;top:261.3px;width:13.0px;height:13.0px;border-radius:50%;background:#d0d0d0"></div>
<div class="t c" style="left:340.0px;width:14px;top:268.3px;font-size:8.40px;color:#fff;">6</div>
<div class="t" style="left:360.5px;top:269.0px;font-size:10.00px;color:#333;;letter-spacing:-0.40px;transform:scaleX(0.9550);transform-origin:left 0">全国设计周（节）联合发起“致敬中国设计...</div>
<div class="t r" style="left:528.3px;width:100px;top:267.8px;font-size:8.60px;color:#aaa;">2019-05-08</div>
<div class="a" style="left:340.5px;top:287.5px;width:13.0px;height:13.0px;border-radius:50%;background:#d0d0d0"></div>
<div class="t c" style="left:340.0px;width:14px;top:294.5px;font-size:8.40px;color:#fff;">7</div>
<div class="t" style="left:360.5px;top:295.2px;font-size:10.00px;color:#333;;letter-spacing:-0.40px;transform:scaleX(0.9550);transform-origin:left 0">贵州清镇试行每月连上22天 方便上班族和农民办事</div>
<div class="t r" style="left:528.3px;width:100px;top:294.0px;font-size:8.60px;color:#aaa;">2019-05-08</div>
<div class="a" style="left:340.5px;top:313.7px;width:13.0px;height:13.0px;border-radius:50%;background:#d0d0d0"></div>
<div class="t c" style="left:340.0px;width:14px;top:320.7px;font-size:8.40px;color:#fff;">8</div>
<div class="t" style="left:360.5px;top:321.4px;font-size:10.00px;color:#333;;letter-spacing:-0.40px;transform:scaleX(0.9550);transform-origin:left 0">夏衍的作品 夏衍故居在哪夏衍的</div>
<div class="t r" style="left:528.3px;width:100px;top:320.2px;font-size:8.60px;color:#aaa;">2019-05-08</div>
<div class="a " style="left:341.0px;top:339.3px;width:46.0px;height:15.7px;border:1px solid #e8e9eb;border-radius:8px;background:#fff"></div>
<div class="t c" style="left:339.0px;width:50px;top:347.5px;font-size:7.80px;color:#555;">上一页</div>
<div class="a " style="left:393.3px;top:339.3px;width:45.5px;height:15.7px;border:1px solid #e8e9eb;border-radius:8px;background:#fff"></div>
<div class="t c" style="left:391.1px;width:50px;top:347.5px;font-size:7.80px;color:#555;">下一页</div>
<div class="t" style="left:663.3px;top:93.9px;font-size:10.60px;color:#333;;letter-spacing:-0.60px">我的会议</div>
<div class="a " style="left:663.0px;top:109.0px;width:302.0px;height:1.0px;background:#eceef1"></div>
<div class="a" style="left:870.8px;top:88.7px;width:10.4px;height:10.4px;border-radius:50%;background:#4a90e2"></div>
<svg class="a" style="left:870.8px;top:88.7px;" width="10.4" height="10.4" viewBox="0 0 10.4 10.4"><path d="M2.08 5.2 H8.32 M5.2 2.08 V8.32" stroke="#fff" stroke-width="1.25"/></svg>
<div class="t" style="left:887.8px;top:94.5px;font-size:9.30px;color:#4a90e2;">新建会议</div>
<div class="a" style="left:931.1px;top:87.0px;width:13.3px;height:13.3px;border-radius:50%;border:1px solid #ececec;background:#fff"></div>
<svg class="a" style="left:931.1px;top:87.0px;" width="13.3" height="13.3" viewBox="0 0 13.3 13.3"><path d="M4.522 6.65 L8.379 3.325 L8.379 9.975 Z" fill="#7a7a7a"/></svg>
<div class="a" style="left:950.6px;top:87.0px;width:13.3px;height:13.3px;border-radius:50%;border:1px solid #ececec;background:#fff"></div>
<svg class="a" style="left:950.6px;top:87.0px;" width="13.3" height="13.3" viewBox="0 0 13.3 13.3"><path d="M8.778 6.65 L4.921 3.325 L4.921 9.975 Z" fill="#7a7a7a"/></svg>
<div class="t" style="left:663.3px;top:127.7px;font-size:10.00px;color:#333;;letter-spacing:-0.40px;transform:scaleX(0.9550);transform-origin:left 0">各部门经理小会议</div>
<div class="t" style="left:663.3px;top:144.9px;font-size:8.30px;color:#888;;letter-spacing:0.30px">会议时间:</div>
<div class="t" style="left:706.7px;top:145.2px;font-size:8.60px;color:#999;">2019-06-03</div>
<div class="t" style="left:757.2px;top:145.2px;font-size:8.40px;color:#999;">09:30 - 10:00</div>
<div class="a " style="left:663.0px;top:159.8px;width:302.0px;height:1.0px;background:#e9ebee"></div>
<div class="a " style="left:929.7px;top:120.0px;width:35.3px;height:13.3px;background:#4aa0f3;border-radius:7px"></div>
<div class="t c" style="left:927.3px;width:40px;top:127.2px;font-size:7.80px;color:#fff;">同意</div>
<div class="a " style="left:929.7px;top:138.0px;width:35.3px;height:13.3px;background:#f87373;border-radius:7px"></div>
<div class="t c" style="left:927.3px;width:40px;top:145.1px;font-size:7.80px;color:#fff;">拒绝</div>
<div class="t" style="left:663.3px;top:177.7px;font-size:10.00px;color:#333;;letter-spacing:-0.40px;transform:scaleX(0.9550);transform-origin:left 0">公司年中大会</div>
<div class="t" style="left:663.3px;top:194.9px;font-size:8.30px;color:#888;;letter-spacing:0.30px">会议时间:</div>
<div class="t" style="left:706.7px;top:195.2px;font-size:8.60px;color:#999;">2019-06-03</div>
<div class="t" style="left:757.2px;top:195.2px;font-size:8.40px;color:#999;">09:30 - 10:00</div>
<div class="a " style="left:663.0px;top:209.8px;width:302.0px;height:1.0px;background:#e9ebee"></div>
<div class="a " style="left:929.7px;top:170.5px;width:35.3px;height:13.3px;background:#5cba6e;border-radius:7px"></div>
<div class="t c" style="left:927.3px;width:40px;top:177.7px;font-size:7.80px;color:#fff;">已同意</div>
<div class="t" style="left:663.3px;top:227.7px;font-size:10.00px;color:#333;;letter-spacing:-0.40px;transform:scaleX(0.9550);transform-origin:left 0">移动端改版</div>
<div class="t" style="left:663.3px;top:244.9px;font-size:8.30px;color:#888;;letter-spacing:0.30px">会议时间:</div>
<div class="t" style="left:706.7px;top:245.2px;font-size:8.60px;color:#999;">2019-06-03</div>
<div class="t" style="left:757.2px;top:245.2px;font-size:8.40px;color:#999;">09:30 - 10:00</div>
<div class="a " style="left:663.0px;top:259.8px;width:302.0px;height:1.0px;background:#e9ebee"></div>
<div class="a " style="left:929.7px;top:237.0px;width:35.3px;height:13.3px;background:#cfcfcf;border-radius:7px"></div>
<div class="t c" style="left:927.3px;width:40px;top:244.2px;font-size:7.80px;color:#fff;">已拒绝</div>
<div class="t" style="left:663.3px;top:277.7px;font-size:10.00px;color:#333;;letter-spacing:-0.40px;transform:scaleX(0.9550);transform-origin:left 0">产品使用讨论会议</div>
<div class="t" style="left:663.3px;top:294.9px;font-size:8.30px;color:#888;;letter-spacing:0.30px">会议时间:</div>
<div class="t" style="left:706.7px;top:295.2px;font-size:8.60px;color:#999;">2019-06-03</div>
<div class="t" style="left:757.2px;top:295.2px;font-size:8.40px;color:#999;">09:30 - 10:00</div>
<div class="a " style="left:663.0px;top:309.8px;width:302.0px;height:1.0px;background:#e9ebee"></div>
<div class="a " style="left:929.7px;top:270.0px;width:35.3px;height:13.3px;background:#4aa0f3;border-radius:7px"></div>
<div class="t c" style="left:927.3px;width:40px;top:277.2px;font-size:7.80px;color:#fff;">同意</div>
<div class="a " style="left:929.7px;top:288.0px;width:35.3px;height:13.3px;background:#f87373;border-radius:7px"></div>
<div class="t c" style="left:927.3px;width:40px;top:295.1px;font-size:7.80px;color:#fff;">拒绝</div>
<div class="t" style="left:663.3px;top:327.7px;font-size:10.00px;color:#333;;letter-spacing:-0.40px;transform:scaleX(0.9550);transform-origin:left 0">产品使用讨论会议</div>
<div class="t" style="left:663.3px;top:344.9px;font-size:8.30px;color:#888;;letter-spacing:0.30px">会议时间:</div>
<div class="t" style="left:706.7px;top:345.2px;font-size:8.60px;color:#999;">2019-06-03</div>
<div class="t" style="left:757.2px;top:345.2px;font-size:8.40px;color:#999;">09:30 - 10:00</div>
<div class="a " style="left:663.0px;top:359.8px;width:302.0px;height:1.0px;background:#e9ebee"></div>
<div class="a " style="left:929.7px;top:320.0px;width:35.3px;height:13.3px;background:#4aa0f3;border-radius:7px"></div>
<div class="t c" style="left:927.3px;width:40px;top:327.2px;font-size:7.80px;color:#fff;">同意</div>
<div class="a " style="left:929.7px;top:338.0px;width:35.3px;height:13.3px;background:#f87373;border-radius:7px"></div>
<div class="t c" style="left:927.3px;width:40px;top:345.1px;font-size:7.80px;color:#fff;">拒绝</div>
<div class="t" style="left:997.6px;top:92.8px;font-size:10.60px;color:#333;;letter-spacing:-0.50px">我的日程</div>
<div class="t" style="left:1088.5px;top:93.1px;font-size:10.80px;color:#4a90e2;">2019年3月19日</div>
<div class="t" style="left:1172.0px;top:92.8px;font-size:9.80px;color:#2a2a2a;-webkit-text-stroke:0.15px #2a2a2a">今日</div>
<div class="a" style="left:1200.7px;top:85.2px;width:13.2px;height:13.2px;border-radius:50%;border:1px solid #ececec;background:#fff"></div>
<svg class="a" style="left:1200.7px;top:85.2px;" width="13.2" height="13.2" viewBox="0 0 13.2 13.2"><path d="M4.488 6.6 L8.316 3.3 L8.316 9.9 Z" fill="#7a7a7a"/></svg>
<div class="a" style="left:1220.2px;top:85.2px;width:13.2px;height:13.2px;border-radius:50%;border:1px solid #ececec;background:#fff"></div>
<svg class="a" style="left:1220.2px;top:85.2px;" width="13.2" height="13.2" viewBox="0 0 13.2 13.2"><path d="M8.712 6.6 L4.884 3.3 L4.884 9.9 Z" fill="#7a7a7a"/></svg>
<div class="a " style="left:998.0px;top:109.2px;width:235.5px;height:1.0px;background:#eceef1"></div>
<div class="t c" style="left:997.8px;width:30px;top:131.1px;font-size:9.30px;color:#555;">一</div>
<div class="t c" style="left:1031.0px;width:30px;top:131.1px;font-size:9.30px;color:#555;">二</div>
<div class="t c" style="left:1064.1px;width:30px;top:131.1px;font-size:9.30px;color:#555;">三</div>
<div class="t c" style="left:1097.3px;width:30px;top:131.1px;font-size:9.30px;color:#555;">四</div>
<div class="t c" style="left:1130.5px;width:30px;top:131.1px;font-size:9.30px;color:#555;">五</div>
<div class="t c" style="left:1163.7px;width:30px;top:131.1px;font-size:9.30px;color:#555;">六</div>
<div class="t c" style="left:1196.8px;width:30px;top:131.1px;font-size:9.30px;color:#555;">日</div>
<div class="t c" style="left:997.8px;width:30px;top:155.5px;font-size:9.60px;color:#ccc;">28</div>
<div class="t c" style="left:1031.0px;width:30px;top:155.5px;font-size:9.60px;color:#555;">29</div>
<div class="t c" style="left:1064.1px;width:30px;top:155.5px;font-size:9.60px;color:#555;">30</div>
<div class="t c" style="left:1097.3px;width:30px;top:155.5px;font-size:9.60px;color:#555;">31</div>
<div class="t c" style="left:1130.5px;width:30px;top:155.5px;font-size:9.60px;color:#555;">1</div>
<div class="t c" style="left:1163.7px;width:30px;top:155.5px;font-size:9.60px;color:#555;">2</div>
<div class="t c" style="left:1196.8px;width:30px;top:155.5px;font-size:9.60px;color:#555;">3</div>
<div class="t c" style="left:997.8px;width:30px;top:180.5px;font-size:9.60px;color:#555;">4</div>
<div class="t c" style="left:1031.0px;width:30px;top:180.5px;font-size:9.60px;color:#555;">5</div>
<div class="t c" style="left:1064.1px;width:30px;top:180.5px;font-size:9.60px;color:#555;">6</div>
<div class="t c" style="left:1097.3px;width:30px;top:180.5px;font-size:9.60px;color:#555;">7</div>
<div class="t c" style="left:1130.5px;width:30px;top:180.5px;font-size:9.60px;color:#555;">8</div>
<div class="t c" style="left:1163.7px;width:30px;top:180.5px;font-size:9.60px;color:#555;">9</div>
<div class="t c" style="left:1196.8px;width:30px;top:180.5px;font-size:9.60px;color:#555;">10</div>
<div class="t c" style="left:997.8px;width:30px;top:205.5px;font-size:9.60px;color:#555;">11</div>
<div class="t c" style="left:1031.0px;width:30px;top:205.5px;font-size:9.60px;color:#555;">12</div>
<div class="t c" style="left:1064.1px;width:30px;top:205.5px;font-size:9.60px;color:#555;">13</div>
<div class="t c" style="left:1097.3px;width:30px;top:205.5px;font-size:9.60px;color:#555;">14</div>
<div class="t c" style="left:1130.5px;width:30px;top:205.5px;font-size:9.60px;color:#555;">15</div>
<div class="t c" style="left:1163.7px;width:30px;top:205.5px;font-size:9.60px;color:#555;">16</div>
<div class="t c" style="left:1196.8px;width:30px;top:205.5px;font-size:9.60px;color:#555;">17</div>
<div class="t c" style="left:997.8px;width:30px;top:230.5px;font-size:9.60px;color:#555;">18</div>
<div class="a" style="left:1038.0px;top:222.7px;width:16.0px;height:16.0px;border-radius:50%;background:#4a90e2"></div>
<div class="t c" style="left:1031.0px;width:30px;top:230.5px;font-size:9.60px;color:#fff;">19</div>
<div class="t c" style="left:1064.1px;width:30px;top:230.5px;font-size:9.60px;color:#555;">20</div>
<div class="t c" style="left:1097.3px;width:30px;top:230.5px;font-size:9.60px;color:#555;">21</div>
<div class="t c" style="left:1130.5px;width:30px;top:230.5px;font-size:9.60px;color:#555;">22</div>
<div class="t c" style="left:1163.7px;width:30px;top:230.5px;font-size:9.60px;color:#555;">23</div>
<div class="t c" style="left:1196.8px;width:30px;top:230.5px;font-size:9.60px;color:#555;">24</div>
<div class="t c" style="left:997.8px;width:30px;top:255.5px;font-size:9.60px;color:#555;">25</div>
<div class="t c" style="left:1031.0px;width:30px;top:255.5px;font-size:9.60px;color:#555;">26</div>
<div class="t c" style="left:1064.1px;width:30px;top:255.5px;font-size:9.60px;color:#555;">27</div>
<div class="t c" style="left:1097.3px;width:30px;top:255.5px;font-size:9.60px;color:#555;">28</div>
<div class="t c" style="left:1130.5px;width:30px;top:255.5px;font-size:9.60px;color:#555;">29</div>
<div class="t c" style="left:1163.7px;width:30px;top:255.5px;font-size:9.60px;color:#555;">30</div>
<div class="t c" style="left:1196.8px;width:30px;top:255.5px;font-size:9.60px;color:#555;">1</div>
<div class="t" style="left:998.5px;top:303.1px;font-size:10.60px;color:#333;;letter-spacing:-0.50px">日程管理</div>
<div class="a" style="left:1200.3px;top:297.1px;width:13.0px;height:13.0px;border-radius:50%;background:#4a90e2"></div>
<svg class="a" style="left:1200.3px;top:297.1px;" width="13" height="13" viewBox="0 0 13 13"><path d="M4.42 6.5 L8.19 3.25 L8.19 9.75 Z" fill="#fff"/></svg>
<div class="a" style="left:1219.8px;top:297.1px;width:13.0px;height:13.0px;border-radius:50%;border:1px solid #ececec;background:#fff"></div>
<svg class="a" style="left:1219.8px;top:297.1px;" width="13" height="13" viewBox="0 0 13 13"><path d="M8.58 6.5 L4.81 3.25 L4.81 9.75 Z" fill="#7a7a7a"/></svg>
<div class="a " style="left:998.0px;top:319.0px;width:235.5px;height:1.0px;background:#eceef1"></div>
<div class="t" style="left:997.0px;top:336.1px;font-size:8.40px;color:#555;;letter-spacing:0.30px">叶子,您好!</div>
<div class="t" style="left:1038.3px;top:336.1px;font-size:8.40px;color:#555;;letter-spacing:0.30px">今日您有</div>
<div class="a" style="left:1074.4px;top:330.7px;width:10.6px;height:10.6px;border-radius:50%;background:#e8352f"></div>
<div class="t c" style="left:1074.7px;width:10px;top:336.5px;font-size:8.40px;color:#fff;">3</div>
<div class="t" style="left:1087.2px;top:336.1px;font-size:8.40px;color:#555;;letter-spacing:0.30px">个议程!</div>
<div class="a " style="left:997.0px;top:357.7px;width:235.7px;height:45.8px;background:#f5f8fd;border-radius:5px"></div>
<div class="a" style="left:1003.4px;top:371.0px;width:3.2px;height:3.2px;border-radius:50%;background:#4a90e2"></div>
<div class="t" style="left:1011.0px;top:372.7px;font-size:10.00px;color:#333;;letter-spacing:-0.40px;transform:scaleX(0.9600);transform-origin:left 0">各部门经理小会议</div>
<div class="t" style="left:1011.0px;top:389.9px;font-size:8.50px;color:#666;">2019-06-03&nbsp;&nbsp;&nbsp;09:30 - 10:00</div>
<div class="t r" style="left:1120.0px;width:100px;top:372.9px;font-size:8.20px;color:#666;;letter-spacing:-0.20px">客户会议室</div>
<div class="a " style="left:997.0px;top:414.3px;width:235.7px;height:45.5px;background:#4a8ee0;border-radius:5px"></div>
<div class="a" style="left:1003.4px;top:427.6px;width:3.2px;height:3.2px;border-radius:50%;background:#fff"></div>
<div class="t" style="left:1011.0px;top:429.3px;font-size:10.00px;color:#fff;;letter-spacing:-0.40px;transform:scaleX(0.9600);transform-origin:left 0">产品使用讨论会议（悬浮时）</div>
<div class="t" style="left:1011.0px;top:446.5px;font-size:8.50px;color:#fff;">2019-06-03&nbsp;&nbsp;&nbsp;09:30 - 10:00</div>
<div class="t r" style="left:1120.0px;width:100px;top:429.5px;font-size:8.20px;color:#fff;;letter-spacing:-0.20px">大会议室</div>
<div class="a " style="left:997.0px;top:470.9px;width:235.7px;height:45.0px;background:#f5f8fd;border-radius:5px"></div>
<div class="a" style="left:1003.4px;top:484.2px;width:3.2px;height:3.2px;border-radius:50%;background:#4a90e2"></div>
<div class="t" style="left:1011.0px;top:485.9px;font-size:10.00px;color:#333;;letter-spacing:-0.40px;transform:scaleX(0.9600);transform-origin:left 0">项目需求调研会议</div>
<div class="t" style="left:1011.0px;top:503.1px;font-size:8.50px;color:#666;">2019-06-03&nbsp;&nbsp;&nbsp;09:30 - 10:00</div>
<div class="t r" style="left:1120.0px;width:100px;top:486.1px;font-size:8.20px;color:#666;;letter-spacing:-0.20px">客户会议室</div>
<div class="t" style="left:78.8px;top:400.7px;font-size:10.60px;color:#4a90e2;;letter-spacing:-0.35px">我的待办（12）</div>
<div class="t" style="left:174.1px;top:400.7px;font-size:10.60px;color:#333;;letter-spacing:-0.35px">我的待阅（6）</div>
<div class="t" style="left:255.0px;top:400.7px;font-size:10.60px;color:#333;;letter-spacing:-0.35px">我的已办（8）</div>
<div class="t" style="left:336.1px;top:400.7px;font-size:10.60px;color:#333;;letter-spacing:-0.35px">我的已阅（3）</div>
<div class="t" style="left:418.5px;top:400.7px;font-size:10.60px;color:#333;;letter-spacing:-0.35px">我的拟稿（1）</div>
<div class="a " style="left:79.0px;top:416.8px;width:551.0px;height:1.0px;background:#eceef1"></div>
<div class="a " style="left:79.0px;top:415.0px;width:72.0px;height:2.4px;background:#4a90e2"></div>
<div class="a" style="left:575.8px;top:396.4px;width:10.4px;height:10.4px;border-radius:50%;background:#4a90e2"></div>
<svg class="a" style="left:575.8px;top:396.4px;" width="10.4" height="10.4" viewBox="0 0 10.4 10.4"><path d="M2.08 5.2 H8.32 M5.2 2.08 V8.32" stroke="#fff" stroke-width="1.25"/></svg>
<div class="t" style="left:593.4px;top:401.9px;font-size:9.30px;color:#4a90e2;">新建流程</div>
<div class="a " style="left:65.0px;top:477.4px;width:578.0px;height:25.6px;background:#f3f4f7"></div>
<div class="a" style="left:79.0px;top:431.3px;width:13.0px;height:13.0px;border-radius:50%;background:#4a90e2"></div>
<div class="t c" style="left:78.5px;width:14px;top:438.3px;font-size:8.40px;color:#fff;">1</div>
<div class="t" style="left:98.8px;top:438.0px;font-size:10.00px;color:#333;;letter-spacing:-0.40px;transform:scaleX(0.9600);transform-origin:left 0">借一万 赔了一套房 这个交易能让你倾家荡产!</div>
<div class="t" style="left:452.0px;top:437.9px;font-size:8.60px;color:#666;;letter-spacing:-0.37px">苏娜</div>
<div class="t" style="left:512.2px;top:437.9px;font-size:8.60px;color:#666;;letter-spacing:-0.37px">公司发文</div>
<div class="t r" style="left:529.8px;width:100px;top:437.9px;font-size:8.55px;color:#aaa;">2019-05-08</div>
<div class="a" style="left:79.0px;top:457.5px;width:13.0px;height:13.0px;border-radius:50%;background:#4a90e2"></div>
<div class="t c" style="left:78.5px;width:14px;top:464.5px;font-size:8.40px;color:#fff;">2</div>
<div class="t" style="left:98.8px;top:464.2px;font-size:10.00px;color:#333;;letter-spacing:-0.40px;transform:scaleX(0.9600);transform-origin:left 0">民生“七有”：盘点十九大回应的人民新期待</div>
<div class="t" style="left:452.0px;top:464.1px;font-size:8.60px;color:#666;;letter-spacing:-0.37px">杨芳</div>
<div class="t" style="left:512.2px;top:464.1px;font-size:8.60px;color:#666;;letter-spacing:-0.37px">请假审批</div>
<div class="t r" style="left:529.8px;width:100px;top:464.1px;font-size:8.55px;color:#aaa;">2019-05-08</div>
<div class="a" style="left:79.0px;top:483.7px;width:13.0px;height:13.0px;border-radius:50%;background:#4a90e2"></div>
<div class="t c" style="left:78.5px;width:14px;top:490.7px;font-size:8.40px;color:#fff;">3</div>
<div class="t" style="left:98.8px;top:490.4px;font-size:10.00px;color:#4a90e2;;letter-spacing:-0.40px;transform:scaleX(0.9600);transform-origin:left 0">父亲在抢救他却在隔壁救别人 当事医生回应质疑</div>
<div class="t" style="left:452.0px;top:490.3px;font-size:8.60px;color:#666;;letter-spacing:-0.37px">谢军</div>
<div class="t" style="left:512.2px;top:490.3px;font-size:8.60px;color:#666;;letter-spacing:-0.37px">报销申请</div>
<div class="t r" style="left:529.8px;width:100px;top:490.3px;font-size:8.55px;color:#aaa;">2019-05-08</div>
<div class="a" style="left:79.0px;top:509.9px;width:13.0px;height:13.0px;border-radius:50%;background:#d0d0d0"></div>
<div class="t c" style="left:78.5px;width:14px;top:516.9px;font-size:8.40px;color:#fff;">4</div>
<div class="t" style="left:98.8px;top:516.6px;font-size:10.00px;color:#333;;letter-spacing:-0.40px;transform:scaleX(0.9600);transform-origin:left 0">宁波口岸引进“汽车侦探” 问题车无所遁形</div>
<div class="t" style="left:452.0px;top:516.5px;font-size:8.60px;color:#666;;letter-spacing:-0.37px">赵娜</div>
<div class="t" style="left:512.2px;top:516.5px;font-size:8.60px;color:#666;;letter-spacing:-0.37px">部门发文</div>
<div class="t r" style="left:529.8px;width:100px;top:516.5px;font-size:8.55px;color:#aaa;">2019-05-08</div>
<div class="a" style="left:79.0px;top:536.1px;width:13.0px;height:13.0px;border-radius:50%;background:#d0d0d0"></div>
<div class="t c" style="left:78.5px;width:14px;top:543.1px;font-size:8.40px;color:#fff;">5</div>
<div class="t" style="left:98.8px;top:542.8px;font-size:10.00px;color:#333;;letter-spacing:-0.40px;transform:scaleX(0.9600);transform-origin:left 0">贵州清镇试行每月连上22天 方便上班族和农民办事</div>
<div class="t" style="left:452.0px;top:542.7px;font-size:8.60px;color:#666;;letter-spacing:-0.37px">常明</div>
<div class="t" style="left:512.2px;top:542.7px;font-size:8.60px;color:#666;;letter-spacing:-0.37px">公司发文</div>
<div class="t r" style="left:529.8px;width:100px;top:542.7px;font-size:8.55px;color:#aaa;">2019-05-08</div>
<div class="a" style="left:79.0px;top:562.3px;width:13.0px;height:13.0px;border-radius:50%;background:#d0d0d0"></div>
<div class="t c" style="left:78.5px;width:14px;top:569.3px;font-size:8.40px;color:#fff;">6</div>
<div class="t" style="left:98.8px;top:569.0px;font-size:10.00px;color:#333;;letter-spacing:-0.40px;transform:scaleX(0.9600);transform-origin:left 0">夏衍的作品 夏衍故居在哪夏衍的</div>
<div class="t" style="left:452.0px;top:568.9px;font-size:8.60px;color:#666;;letter-spacing:-0.37px">史杰</div>
<div class="t" style="left:512.2px;top:568.9px;font-size:8.60px;color:#666;;letter-spacing:-0.37px">请假审批</div>
<div class="t r" style="left:529.8px;width:100px;top:568.9px;font-size:8.55px;color:#aaa;">2019-05-08</div>
<div class="a" style="left:79.0px;top:588.5px;width:13.0px;height:13.0px;border-radius:50%;background:#d0d0d0"></div>
<div class="t c" style="left:78.5px;width:14px;top:595.5px;font-size:8.40px;color:#fff;">7</div>
<div class="t" style="left:98.8px;top:595.2px;font-size:10.00px;color:#333;;letter-spacing:-0.40px;transform:scaleX(0.9600);transform-origin:left 0">日本化妆品高丝在华变策：停止本土化生产</div>
<div class="t" style="left:452.0px;top:595.1px;font-size:8.60px;color:#666;;letter-spacing:-0.37px">张超</div>
<div class="t" style="left:512.2px;top:595.1px;font-size:8.60px;color:#666;;letter-spacing:-0.37px">报销申请</div>
<div class="t r" style="left:529.8px;width:100px;top:595.1px;font-size:8.55px;color:#aaa;">2019-05-08</div>
<div class="a" style="left:79.0px;top:614.7px;width:13.0px;height:13.0px;border-radius:50%;background:#d0d0d0"></div>
<div class="t c" style="left:78.5px;width:14px;top:621.7px;font-size:8.40px;color:#fff;">8</div>
<div class="t" style="left:98.8px;top:621.4px;font-size:10.00px;color:#333;;letter-spacing:-0.40px;transform:scaleX(0.9600);transform-origin:left 0">西湖发现黑天鹅，它们来自哪里</div>
<div class="t" style="left:452.0px;top:621.3px;font-size:8.60px;color:#666;;letter-spacing:-0.37px">郑洋</div>
<div class="t" style="left:512.2px;top:621.3px;font-size:8.60px;color:#666;;letter-spacing:-0.37px">部门发文</div>
<div class="t r" style="left:529.8px;width:100px;top:621.3px;font-size:8.55px;color:#aaa;">2019-05-08</div>
<div class="a " style="left:79.0px;top:641.4px;width:45.3px;height:15.3px;border:1px solid #e8e9eb;border-radius:8px;background:#fff"></div>
<div class="t c" style="left:76.7px;width:50px;top:649.4px;font-size:7.80px;color:#555;">上一页</div>
<div class="a " style="left:131.4px;top:641.4px;width:45.3px;height:15.3px;border:1px solid #e8e9eb;border-radius:8px;background:#fff"></div>
<div class="t c" style="left:129.1px;width:50px;top:649.4px;font-size:7.80px;color:#555;">下一页</div>
<div class="t" style="left:663.0px;top:401.1px;font-size:10.60px;color:#4a90e2;;letter-spacing:-0.60px">我的文件</div>
<div class="t" style="left:726.3px;top:401.1px;font-size:10.60px;color:#333;;letter-spacing:-0.60px">云文件</div>
<div class="a " style="left:663.0px;top:416.6px;width:302.0px;height:1.0px;background:#eceef1"></div>
<div class="a " style="left:663.0px;top:414.8px;width:41.0px;height:2.4px;background:#4a90e2"></div>
<div class="a" style="left:931.1px;top:395.0px;width:13.3px;height:13.3px;border-radius:50%;border:1px solid #ececec;background:#fff"></div>
<svg class="a" style="left:931.1px;top:395.0px;" width="13.3" height="13.3" viewBox="0 0 13.3 13.3"><path d="M4.522 6.65 L8.379 3.325 L8.379 9.975 Z" fill="#7a7a7a"/></svg>
<div class="a" style="left:950.6px;top:395.0px;width:13.3px;height:13.3px;border-radius:50%;border:1px solid #ececec;background:#fff"></div>
<svg class="a" style="left:950.6px;top:395.0px;" width="13.3" height="13.3" viewBox="0 0 13.3 13.3"><path d="M8.778 6.65 L4.921 3.325 L4.921 9.975 Z" fill="#7a7a7a"/></svg>
<div class="a " style="left:663.0px;top:451.0px;width:301.0px;height:1.0px;background:#e9ebee"></div>
<svg class="a" style="left:661.7px;top:426.4px;" width="21" height="17.5" viewBox="0 0 21 17.5"><path d="M0.5 2 C0.5 1 1 0.5 2 0.5 H7.5 L9.3 2.2 H19 C20 2.2 20.5 2.7 20.5 3.7 V15.5 C20.5 16.5 20 17 19 17 H2 C1 17 0.5 16.5 0.5 15.5 Z" fill="#fccc3c"/><path d="M0.5 2 C0.5 1 1 0.5 2 0.5 H7.5 L9.3 2.2 H11 V3 H0.5 Z" fill="#dba421"/></svg>
<div class="t" style="left:692.8px;top:438.0px;font-size:10.00px;color:#333;;letter-spacing:-0.40px;transform:scaleX(0.9500);transform-origin:left 0">文件夹1.1</div>
<svg class="a" style="left:950.0px;top:432.1px;" width="16" height="6" viewBox="0 0 16 6"><circle cx="4.5" cy="3" r="1.3" fill="#8a8a8a"/><circle cx="8.6" cy="3" r="1.3" fill="#8a8a8a"/><circle cx="12.6" cy="3" r="1.3" fill="#8a8a8a"/></svg>
<div class="a " style="left:663.0px;top:483.4px;width:301.0px;height:1.0px;background:#e9ebee"></div>
<svg class="a" style="left:661.5px;top:458.3px;" width="21" height="19" viewBox="0 0 21 19"><path d="M3 0.5 H13.5 L18 5 V17 H3 Z" fill="#3fa04c" opacity="0.2"/><path d="M13.5 0.5 V5 H18 Z" fill="#3fa04c" opacity="0.45"/><rect x="0.5" y="11.5" width="20" height="6.5" rx="1" fill="#3fa04c"/><text x="10.5" y="16.6" font-size="4.4" fill="#fff" text-anchor="middle" font-family="Liberation Sans" font-weight="bold">XLS</text><path d="M6 4 H11 M6 6.3 H11 M6 8.6 H11 M6 4 V8.6" stroke="#3fa04c" stroke-width="1.2" fill="none"/></svg>
<div class="t" style="left:692.8px;top:470.7px;font-size:10.00px;color:#333;;letter-spacing:-0.40px;transform:scaleX(0.9500);transform-origin:left 0">Excel表格</div>
<svg class="a" style="left:950.0px;top:464.8px;" width="16" height="6" viewBox="0 0 16 6"><circle cx="4.5" cy="3" r="1.3" fill="#4a90e2"/><circle cx="8.6" cy="3" r="1.3" fill="#4a90e2"/><circle cx="12.6" cy="3" r="1.3" fill="#4a90e2"/></svg>
<div class="a " style="left:663.0px;top:516.0px;width:301.0px;height:1.0px;background:#e9ebee"></div>
<svg class="a" style="left:661.5px;top:491.2px;" width="21" height="19" viewBox="0 0 21 19"><path d="M3 0.5 H13.5 L18 5 V17 H3 Z" fill="#8fa3b5" opacity="0.2"/><path d="M13.5 0.5 V5 H18 Z" fill="#8fa3b5" opacity="0.45"/><rect x="0.5" y="11.5" width="20" height="6.5" rx="1" fill="#8fa3b5"/><text x="10.5" y="16.6" font-size="4.4" fill="#fff" text-anchor="middle" font-family="Liberation Sans" font-weight="bold">PNG</text><rect x="7" y="4" width="7" height="5" fill="none" stroke="#8fa3b5" stroke-width="0.8"/></svg>
<div class="t" style="left:692.8px;top:503.6px;font-size:10.00px;color:#333;;letter-spacing:-0.40px;transform:scaleX(0.9500);transform-origin:left 0">PNG-图片</div>
<svg class="a" style="left:950.0px;top:497.7px;" width="16" height="6" viewBox="0 0 16 6"><circle cx="4.5" cy="3" r="1.3" fill="#8a8a8a"/><circle cx="8.6" cy="3" r="1.3" fill="#8a8a8a"/><circle cx="12.6" cy="3" r="1.3" fill="#8a8a8a"/></svg>
<div class="a " style="left:663.0px;top:548.8px;width:301.0px;height:1.0px;background:#e9ebee"></div>
<svg class="a" style="left:661.5px;top:524.2px;" width="21" height="19" viewBox="0 0 21 19"><path d="M3 0.5 H13.5 L18 5 V17 H3 Z" fill="#8fa3b5" opacity="0.2"/><path d="M13.5 0.5 V5 H18 Z" fill="#8fa3b5" opacity="0.45"/><rect x="0.5" y="11.5" width="20" height="6.5" rx="1" fill="#8fa3b5"/><text x="10.5" y="16.6" font-size="4.4" fill="#fff" text-anchor="middle" font-family="Liberation Sans" font-weight="bold">JPEG</text><rect x="7" y="4" width="7" height="5" fill="none" stroke="#8fa3b5" stroke-width="0.8"/></svg>
<div class="t" style="left:692.8px;top:536.6px;font-size:10.00px;color:#333;;letter-spacing:-0.40px;transform:scaleX(0.9500);transform-origin:left 0">JPG图-移动端改版讨论会</div>
<svg class="a" style="left:950.0px;top:530.7px;" width="16" height="6" viewBox="0 0 16 6"><circle cx="4.5" cy="3" r="1.3" fill="#8a8a8a"/><circle cx="8.6" cy="3" r="1.3" fill="#8a8a8a"/><circle cx="12.6" cy="3" r="1.3" fill="#8a8a8a"/></svg>
<div class="a " style="left:663.0px;top:582.0px;width:301.0px;height:1.0px;background:#e9ebee"></div>
<svg class="a" style="left:661.5px;top:556.2px;" width="21" height="19" viewBox="0 0 21 19"><path d="M3 0.5 H13.5 L18 5 V17 H3 Z" fill="#e35b2c" opacity="0.2"/><path d="M13.5 0.5 V5 H18 Z" fill="#e35b2c" opacity="0.45"/><rect x="0.5" y="11.5" width="20" height="6.5" rx="1" fill="#e35b2c"/><text x="10.5" y="16.6" font-size="4.4" fill="#fff" text-anchor="middle" font-family="Liberation Sans" font-weight="bold">PPT</text><circle cx="10.5" cy="6.5" r="2.8" fill="#e35b2c"/></svg>
<div class="t" style="left:692.8px;top:568.6px;font-size:10.00px;color:#333;;letter-spacing:-0.40px;transform:scaleX(0.9500);transform-origin:left 0">PPT-移动端改版讨论会</div>
<svg class="a" style="left:950.0px;top:562.7px;" width="16" height="6" viewBox="0 0 16 6"><circle cx="4.5" cy="3" r="1.3" fill="#8a8a8a"/><circle cx="8.6" cy="3" r="1.3" fill="#8a8a8a"/><circle cx="12.6" cy="3" r="1.3" fill="#8a8a8a"/></svg>
<div class="a " style="left:663.0px;top:614.2px;width:301.0px;height:1.0px;background:#e9ebee"></div>
<svg class="a" style="left:661.5px;top:588.8px;" width="21" height="19" viewBox="0 0 21 19"><path d="M3 0.5 H13.5 L18 5 V17 H3 Z" fill="#8fa3b5" opacity="0.2"/><path d="M13.5 0.5 V5 H18 Z" fill="#8fa3b5" opacity="0.45"/><rect x="0.5" y="11.5" width="20" height="6.5" rx="1" fill="#8fa3b5"/><text x="10.5" y="16.6" font-size="4.4" fill="#fff" text-anchor="middle" font-family="Liberation Sans" font-weight="bold">ZIP</text><path d="M10 1 V10" stroke="#8fa3b5" stroke-width="1.4" stroke-dasharray="1 0.8"/></svg>
<div class="t" style="left:692.8px;top:601.2px;font-size:10.00px;color:#333;;letter-spacing:-0.40px;transform:scaleX(0.9500);transform-origin:left 0">ZIP压缩包</div>
<svg class="a" style="left:950.0px;top:595.3px;" width="16" height="6" viewBox="0 0 16 6"><circle cx="4.5" cy="3" r="1.3" fill="#8a8a8a"/><circle cx="8.6" cy="3" r="1.3" fill="#8a8a8a"/><circle cx="12.6" cy="3" r="1.3" fill="#8a8a8a"/></svg>
<div class="a " style="left:663.0px;top:647.1px;width:301.0px;height:1.0px;background:#e9ebee"></div>
<svg class="a" style="left:661.5px;top:621.9px;" width="21" height="19" viewBox="0 0 21 19"><path d="M3 0.5 H13.5 L18 5 V17 H3 Z" fill="#2e7fd6" opacity="0.2"/><path d="M13.5 0.5 V5 H18 Z" fill="#2e7fd6" opacity="0.45"/><rect x="0.5" y="11.5" width="20" height="6.5" rx="1" fill="#2e7fd6"/><text x="10.5" y="16.6" font-size="4.4" fill="#fff" text-anchor="middle" font-family="Liberation Sans" font-weight="bold">DOC</text><path d="M5.5 4 L6.8 9 L8 5.5 L9.2 9 L10.5 4 M11.5 5 H15 M11.5 7 H15" stroke="#2e7fd6" stroke-width="0.9" fill="none"/></svg>
<div class="t" style="left:692.8px;top:634.3px;font-size:10.00px;color:#333;;letter-spacing:-0.40px;transform:scaleX(0.9500);transform-origin:left 0">Word文档</div>
<svg class="a" style="left:950.0px;top:628.4px;" width="16" height="6" viewBox="0 0 16 6"><circle cx="4.5" cy="3" r="1.3" fill="#8a8a8a"/><circle cx="8.6" cy="3" r="1.3" fill="#8a8a8a"/><circle cx="12.6" cy="3" r="1.3" fill="#8a8a8a"/></svg>
<div class="a " style="left:663.0px;top:679.9px;width:301.0px;height:1.0px;background:#e9ebee"></div>
<svg class="a" style="left:661.5px;top:654.4px;" width="21" height="19" viewBox="0 0 21 19"><path d="M3 0.5 H13.5 L18 5 V17 H3 Z" fill="#8f4bb5" opacity="0.2"/><path d="M13.5 0.5 V5 H18 Z" fill="#8f4bb5" opacity="0.45"/><rect x="0.5" y="11.5" width="20" height="6.5" rx="1" fill="#8f4bb5"/><text x="10.5" y="16.6" font-size="4.4" fill="#fff" text-anchor="middle" font-family="Liberation Sans" font-weight="bold">MP4</text><path d="M8.5 3.5 L13 6.5 L8.5 9.5 Z" fill="#8f4bb5"/></svg>
<div class="t" style="left:692.8px;top:666.8px;font-size:10.00px;color:#333;;letter-spacing:-0.40px;transform:scaleX(0.9500);transform-origin:left 0">小视频-移动端改版讨论会</div>
<svg class="a" style="left:950.0px;top:660.9px;" width="16" height="6" viewBox="0 0 16 6"><circle cx="4.5" cy="3" r="1.3" fill="#8a8a8a"/><circle cx="8.6" cy="3" r="1.3" fill="#8a8a8a"/><circle cx="12.6" cy="3" r="1.3" fill="#8a8a8a"/></svg>
</div></body></html>
